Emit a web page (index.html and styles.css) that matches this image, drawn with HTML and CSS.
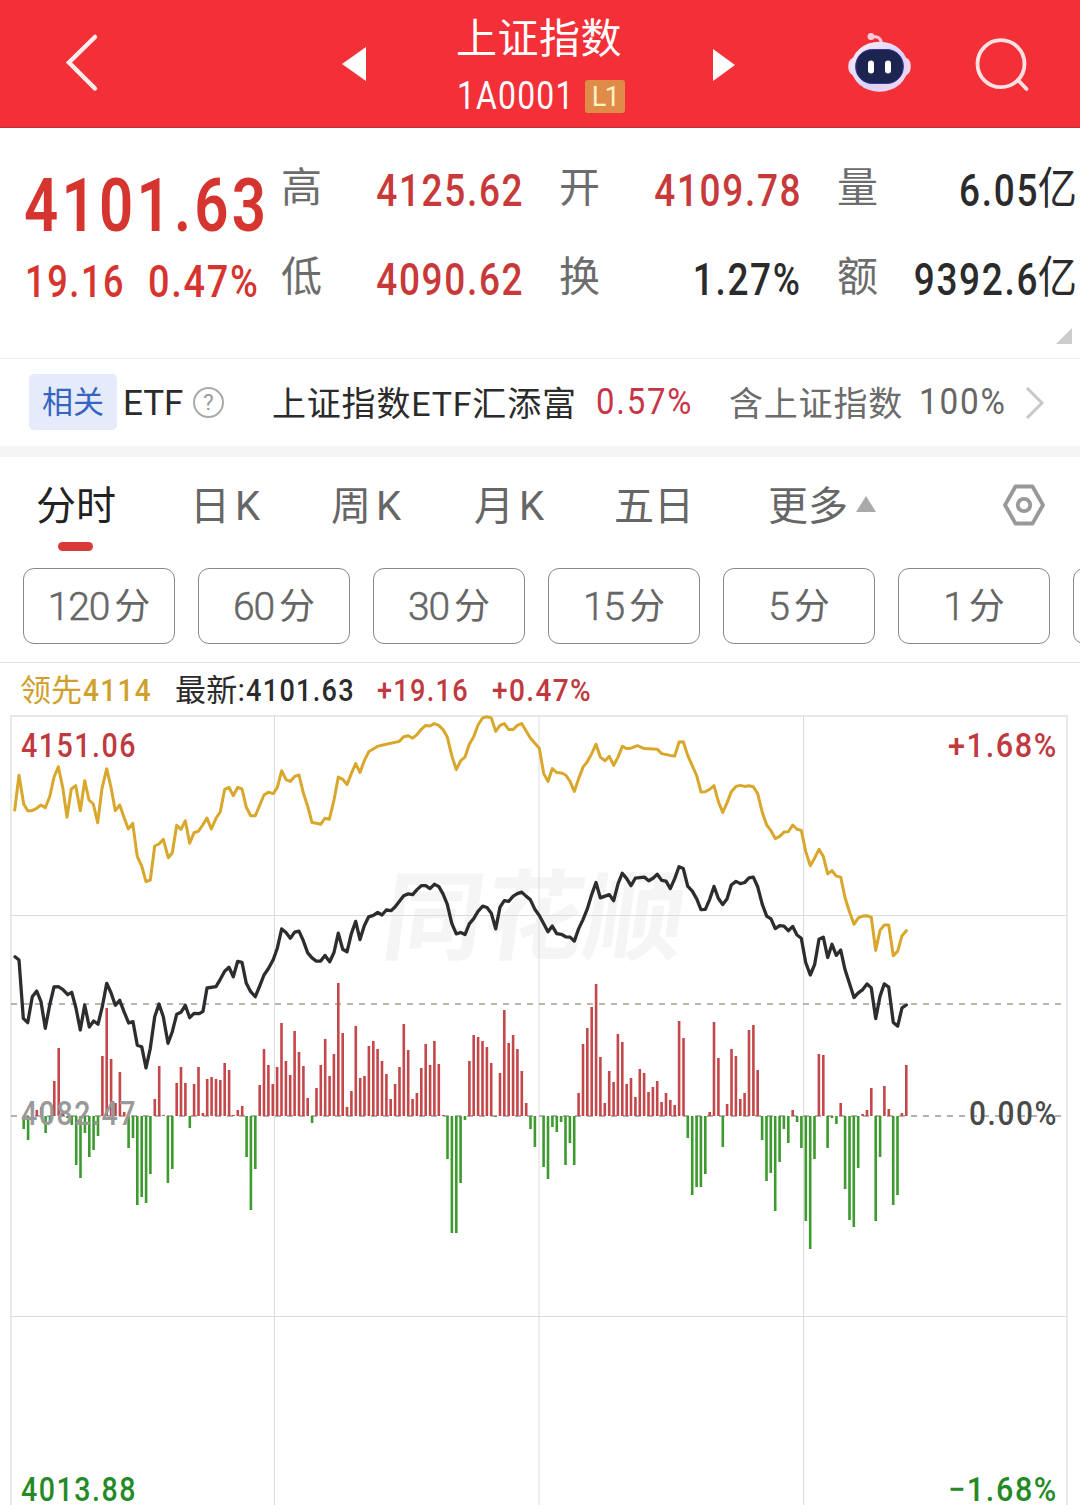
FILE: index.html
```html
<!DOCTYPE html>
<html lang="zh-CN">
<head>
<meta charset="utf-8">
<title>上证指数</title>
<link rel="stylesheet" href="styles.css">
</head>
<body>
<header class="topbar">
  <svg class="icon-back" width="40" height="64" viewBox="0 0 40 64"><path d="M34 6 8 31.500 34 57.500"/></svg>
  <svg class="arrow prev" width="24" height="36" viewBox="0 0 24 36"><path d="M0 18 24 1V35Z"/></svg>
  <div class="title">
    <h1>上证指数</h1>
    <div class="code"><span class="num">1A0001</span><span class="level">L1</span></div>
  </div>
  <svg class="arrow next" width="22" height="34" viewBox="0 0 22 34"><path d="M22 17 0 1V33Z"/></svg>
  <svg class="robot" width="64" height="62" viewBox="847 32 64 62">
    <defs>
      <linearGradient id="shell" x1="0" y1="0" x2="1" y2="1"><stop offset="0" stop-color="#fff0f6"/><stop offset=".55" stop-color="#d9d4fa"/><stop offset="1" stop-color="#f6d5ec"/></linearGradient>
    </defs>
    <path d="M871 37Q881 35 881.500 44" fill="none" stroke="#ffc9d6" stroke-width="3"/>
    <circle cx="871" cy="36.500" r="3.500" fill="#ffc9d6"/>
    <rect x="848.300" y="57" width="62.400" height="19" rx="8" fill="#f3d8ef"/>
    <ellipse cx="879.500" cy="66.700" rx="28.500" ry="25" fill="url(#shell)"/>
    <rect x="855.700" y="49.500" width="47.600" height="34" rx="16.500" fill="#1b2550" stroke="#3a35a0" stroke-width="1"/>
    <rect x="868" y="60.500" width="6" height="13" rx="3" fill="#fff"/>
    <rect x="885" y="60.500" width="6" height="13" rx="3" fill="#fff"/>
  </svg>
  <svg class="search" width="56" height="56" viewBox="974 37 56 56"><circle cx="1001" cy="63.700" r="23.500"/><path d="M1018 80 1026.500 89"/></svg>
</header>

<section class="quote">
  <div class="last">
    <div class="price num">4101.63</div>
    <div class="change"><span class="num diff">19.16</span><span class="num">0.47%</span></div>
  </div>
  <dl class="stats">
    <div><dt>高</dt><dd class="num up">4125.62</dd></div>
    <div><dt>开</dt><dd class="num up">4109.78</dd></div>
    <div><dt>量</dt><dd class="num">6.05<b>亿</b></dd></div>
    <div><dt>低</dt><dd class="num up">4090.62</dd></div>
    <div><dt>换</dt><dd class="num">1.27%</dd></div>
    <div><dt>额</dt><dd class="num">9392.6<b>亿</b></dd></div>
  </dl>
  <i class="corner"></i>
</section>

<section class="related">
  <span class="tag">相关</span>
  <span class="etf">ETF</span>
  <span class="help">?</span>
  <span class="fund">上证指数<span>ETF</span>汇添富</span>
  <span class="num pct">0.57%</span>
  <span class="contains">含上证指数</span>
  <span class="num share">100%</span>
  <svg width="20" height="34" viewBox="0 0 20 34"><path d="M2 2 17 17 2 32"/></svg>
</section>

<nav class="tabs">
  <a class="active">分时</a><a>日<span>K</span></a><a>周<span>K</span></a><a>月<span>K</span></a><a>五日</a><a class="more">更多<i></i></a>
  <svg width="44" height="44" viewBox="0 0 44 44"><path d="M13.500 3.500H30.500L41 22 30.500 40.500H13.500L3 22Z"/><circle cx="22" cy="22" r="6.200"/></svg>
</nav>

<div class="periods">
  <span><em>120</em>分</span><span><em>60</em>分</span><span><em>30</em>分</span><span><em>15</em>分</span><span><em>5</em>分</span><span><em>1</em>分</span><span></span>
</div>

<section class="chart">
  <svg id="chart" width="1080" height="842" viewBox="0 663 1080 842">
    <g class="legend">
      <text class="lead" x="20" y="701" textLength="62">领先</text>
      <text class="lead" x="83" y="701" textLength="69" lengthAdjust="spacingAndGlyphs">4114</text>
      <text class="latest" x="175" y="701" textLength="70">最新:</text>
      <text class="latest" x="246" y="701" textLength="109" lengthAdjust="spacingAndGlyphs">4101.63</text>
      <text class="rise" x="377" y="701" textLength="92" lengthAdjust="spacingAndGlyphs">+19.16</text>
      <text class="rise" x="492" y="701" textLength="100" lengthAdjust="spacingAndGlyphs">+0.47%</text>
    </g>
    <text class="watermark" transform="translate(379 952) skewX(-8)" textLength="302" lengthAdjust="spacingAndGlyphs">同花顺</text>
    <path class="grid edge" d="M11 1505V716H1067V1505"/>
    <path class="grid" d="M274.500 716V1505M539 716V1505M803.500 716V1505M11 915.500H1067M11 1316.500H1067"/>
    <path class="dash current" d="M11 1004H1067"/>
    <path class="dash" d="M11 1116H1067"/>
    <g class="scale">
      <text class="rise" x="21" y="757" textLength="116" lengthAdjust="spacingAndGlyphs">4151.06</text>
      <text class="rise" x="948" y="757" textLength="110" lengthAdjust="spacingAndGlyphs">+1.68%</text>
      <text class="zero" x="969" y="1125" textLength="89" lengthAdjust="spacingAndGlyphs">0.00%</text>
      <text class="fall" x="21" y="1501" textLength="116" lengthAdjust="spacingAndGlyphs">4013.88</text>
      <text class="fall" x="948" y="1501" textLength="110" lengthAdjust="spacingAndGlyphs">−1.68%</text>
    </g>
    <path id="bars-up" class="bar up"/>
    <path id="bars-down" class="bar down"/>
    <polyline id="lead-line" class="line lead-line"/>
    <polyline id="price-line" class="line price-line"/>
    <g class="scale"><text class="prev-close" x="21" y="1125" textLength="116" lengthAdjust="spacingAndGlyphs">4082.47</text></g>
  </svg>
</section>
<script src="chart.js"></script>
</body>
</html>
```
FILE: styles.css
```css
* { box-sizing: border-box; }
body {
  margin: 0;
  width: 1080px;
  height: 1505px;
  overflow: hidden;
  background: #fff;
  color: #2b2b2b;
  font-family: Roboto, "Noto Sans CJK SC", sans-serif;
}
svg { display: block; flex: none; }
.num { display: inline-block; white-space: nowrap; transform: scaleX(.92); transform-origin: left center; }

.topbar { display: flex; height: 128px; background: #f32f38; border-bottom: 1px solid #b9343c; color: #fff; }
.icon-back { margin: 31px 0 0 61px; }
.icon-back path { fill: none; stroke: #ffeced; stroke-width: 4.5; stroke-linecap: round; }
.arrow { fill: #fff; }
.prev { margin: 46px 0 0 241px; }
.next { margin: 48px 0 0 72px; }
.title { flex: none; width: 184px; margin-left: 91px; padding-top: 13px; }
.title h1 { margin: 0; font-size: 41px; line-height: 52px; font-weight: 400; letter-spacing: .5px; text-indent: -1px; }
.code { display: flex; align-items: center; height: 33px; margin-top: 15px; }
.code .num { width: 128px; font-size: 38px; line-height: 33px; letter-spacing: 1.4px; transform: scaleX(.84); }
.level { width: 40px; height: 33px; border-radius: 3px; background: #e08c48; color: #fff3c4; font-size: 27px; line-height: 34px; text-align: center; letter-spacing: -1.5px; }
.robot { margin: 32px 0 0 112px; }
.search { margin: 37px 0 0 63px; }
.search circle, .search path { fill: none; stroke: #ffe1e2; stroke-width: 3.8; stroke-linecap: round; }

.quote { position: relative; display: flex; height: 231px; border-bottom: 1px solid #ececec; }
.last { flex: none; width: 281px; padding: 35px 0 0 24px; color: #d6352f; }
.price { font-size: 75px; line-height: 84px; font-weight: 600; letter-spacing: 4px; transform: scaleX(.8); }
.change { display: flex; margin-top: 10px; padding-left: 1px; font-size: 44px; line-height: 50px; font-weight: 500; letter-spacing: 2px; }
.change .diff { width: 123px; }
.change .num { transform: scaleX(.84); }
.change .diff { transform: scaleX(.82); }
.change .num:last-child { transform: scaleX(.86); }
.stats { display: grid; grid-template-columns: repeat(3, 242px); column-gap: 36px; grid-auto-rows: 89px; margin: 17px 0 0; }
.stats div { display: flex; justify-content: space-between; align-items: center; }
.stats dt { font-size: 41px; line-height: 60px; color: #6c6c6c; font-weight: 400; margin-top: -3px; }
.stats dd { margin: 2px -1px 0 0; font-size: 44px; line-height: 60px; font-weight: 500; letter-spacing: 2px; transform: scaleX(.84); transform-origin: right center; }
.stats b { display: inline-block; margin-right: 5px; font-weight: 400; letter-spacing: 0; transform: scaleX(1.06) translateY(-2px); }
.up { color: #c8393a; }
.corner { position: absolute; right: 8px; bottom: 14px; border-left: 16px solid transparent; border-bottom: 16px solid #ccc; }

.related { display: flex; align-items: center; height: 98px; padding-left: 29px; border-bottom: 11px solid #f5f5f5; white-space: nowrap; }
.tag { width: 88px; height: 56px; margin-top: -1px; border-radius: 5px; background: #e6ebfc; color: #3565c0; font-size: 31px; line-height: 58px; text-align: center; }
.etf { width: 70px; margin: 2px 0 0 6px; font-size: 35px; }
.help { width: 31px; height: 31px; border: 2px solid #aaa; border-radius: 50%; color: #999; font-size: 22px; line-height: 27px; text-align: center; }
.fund { width: 324px; margin: -3px 0 0 48px; font-size: 34px; letter-spacing: .8px; }
.pct { width: 133px; margin-top: -2px; color: #c83448; font-size: 37px; letter-spacing: 2px; transform: scaleX(.89); }
.contains { width: 190px; margin-top: -3px; font-size: 34px; letter-spacing: .8px; color: #6c6c6c; }
.share { width: 106px; margin-top: -3px; color: #666; font-size: 37px; letter-spacing: 2px; transform: scaleX(.9); }
.related path { fill: none; stroke: #c8c8c8; stroke-width: 3; }

.tabs { display: flex; height: 111px; padding-left: 36px; font-size: 40px; line-height: 99px; color: #666; }
.tabs a { position: relative; width: 142px; white-space: nowrap; }
.tabs a:first-child { width: 154px; }
.tabs a:nth-child(2) { width: 141px; }
.tabs a:nth-child(3) { width: 143px; }
.tabs a:nth-child(4) { width: 140px; }
.tabs a:nth-child(5) { width: 154px; }
.tabs span { margin-left: 5px; }
.tabs .active { color: #222; }
.tabs .active::after { content: ""; position: absolute; left: 22px; top: 85px; width: 35px; height: 9px; border-radius: 5px; background: #d93a36; }
.tabs .more { width: 234px; }
.more i { display: inline-block; margin-left: 8px; vertical-align: 8px; border: 10px solid transparent; border-top: 0; border-bottom: 16px solid #aaa; }
.tabs svg { margin-top: 26px; fill: none; stroke: #999; stroke-width: 3.8; stroke-linejoin: round; }

.periods { display: flex; gap: 23px; height: 95px; padding-left: 23px; border-bottom: 1px solid #e2e2e2; overflow: hidden; }
.periods span { display: flex; flex: none; justify-content: center; gap: 5px; width: 152px; height: 76px; border: 1px solid #888; border-radius: 11px; color: #666; font-size: 36px; line-height: 76px; }
.periods em { font-style: normal; font-size: 39px; font-weight: 300; -webkit-text-stroke: .5px #666; letter-spacing: -1.2px; }

.legend text { font-size: 31px; font-weight: 500; letter-spacing: 1.5px; }
.legend text:nth-child(1), .legend text:nth-child(3) { font-weight: 400; letter-spacing: 0; }
.lead { fill: #d0a02c; }
.latest { fill: #2b2b2b; }
.rise { fill: #c0393e; }
.fall { fill: #258a25; }
.zero { fill: #4a4a4a; }
.prev-close { fill: #999; }
.scale text { font-size: 34px; font-weight: 500; letter-spacing: 1.8px; }
.watermark { font-size: 98px; font-weight: 700; fill: #f5f5f5; }
.grid { fill: none; stroke: #dcdcdc; stroke-width: 1; }
.edge { stroke: #e8e8e8; stroke-width: 2; }
.dash { stroke: #999; stroke-width: 1.5; stroke-dasharray: 6 6; }
.current { stroke: #a5a090; }
.bar { fill: none; stroke-width: 2.6; }
.bar.up { stroke: #c4474a; }
.bar.down { stroke: #3d9a2e; }
.line { fill: none; stroke-linejoin: round; stroke-linecap: round; }
.lead-line { stroke: #d8a72c; stroke-width: 3; }
.price-line { stroke: #2d2d2d; stroke-width: 3.3; }
```
FILE: chart.js
```js
// Per-minute momentum bars, in pixels above (+) or below (-) the zero line.
const momentum = [
  0,0,-13,-24,0,6,9,-17,-6,35,68,2,-2,-9,-49,-62,-17,-41,-34,-20,
  60,108,57,13,44,4,-32,-22,-89,-81,-87,-58,17,50,1,-67,-53,33,49,33,
  -12,32,49,3,37,39,37,36,53,46,1,6,10,-41,-94,-53,31,67,51,32,
  49,93,55,41,85,64,50,18,-7,28,51,77,40,62,133,83,9,25,90,38,
  40,70,75,67,55,42,17,32,49,92,66,17,23,48,72,51,75,52,1,-43,
  -117,-117,-67,-4,55,81,79,75,69,53,-1,43,106,73,81,67,45,13,-13,-31,
  0,-51,-63,-11,-16,-6,-49,-27,-49,23,72,88,109,132,59,13,45,34,82,74,
  32,38,19,47,43,24,29,35,14,23,16,11,95,78,-22,-79,-71,-71,-58,4,
  94,58,-31,12,67,60,17,23,86,91,46,-24,-65,-57,-95,-46,-13,-27,6,-6,
  -32,-105,-133,-43,62,61,-32,-2,-8,13,-73,-104,-111,-52,2,6,28,-105,-41,30,
  7,-89,-79,3,51
];

const leadPoints = `14.700,810 19,775.300 23.700,804 27.700,810.700 32,810.700 36.700,808.300 41,805 45.300,807.700 49.700,796.700 54,777.300
58.300,766.700 62.700,787.300 67,817.300 71.300,789 75.700,785.700 80.300,810.700 84.700,780.700 89,800 93.300,804 97.700,822.700
102,788.300 106.700,768.700 111,787.300 115.300,810.700 119.700,805 124,817.300 128.300,829 132.700,823.300 137.300,856.700 141.700,866
146,881.700 150.300,880 154.700,846 159,844 163.300,839.300 168.300,857.700 172.300,852.700 176.700,825.300 181,829.300 185.300,820.700
189.700,843.300 194,832.700 198.300,831.300 202.700,825 207,818 211.300,829 216,818.300 220.300,811.700 224.700,789.300 229,787.300
233.300,795.700 237.700,787.300 242,789 246.300,807.300 250.700,815.700 255.300,815.700 264,795 268.300,792.300 273.300,793.600 277.300,787.500
281.700,770.700 286,779.600 290.300,781.400 294.700,776.400 299,775 303.300,792.900 307.700,806.400 312,822.500 316.700,823.200 320.700,824.300
325,818.200 329.300,819.300 334,800 338.300,777.100 342.700,779.300 347,784.600 351.300,773.600 355.700,763.600 360,772.500 364.300,760.700
368.700,751.800 377.300,746.400 386.300,744.300 399.300,741.400 403.700,736.800 408.300,735.700 412.700,738.200 417,734.600 421.300,729.300 425.700,725.400
430,726 434.300,723.600 438.700,725.400 443,729.600 447.300,737.100 451.700,755.400 456.300,769.600 460.700,760.700 465,757.100 469.300,744.300
473.700,736.800 478,725 482.700,717.900 487,716.800 491.300,717.900 495.700,731.400 500,725.400 504.300,723.600 508.700,729.600 513,729.600
517.300,725.400 521.700,723.600 530.300,737.900 539.300,748.200 543.700,773.600 548,781.400 552.300,768.600 556.700,772.500 561.300,772.900 565.700,775
570,781.400 574.300,791.400 578.700,778.600 583,767.100 587.300,761.800 591.700,753.600 596,744.300 600.300,757.100 605,760.700 609.300,756.400
613.700,765.400 618,757.100 622.300,746.400 626.700,748.600 631,748.200 637.300,745.700 644.300,748.600 657.300,749.300 661.700,753.600 670.300,755.400
674.700,756.100 679,742.100 683.300,741.800 687.700,755.400 696.700,775.700 701,792.100 705.300,791.800 709.700,789.300 714,785.700 718.300,801.400
722.700,812.500 727,802.900 731.300,791.800 736,786.400 740.300,785.400 744.700,786.400 749,785.700 753.300,786.800 757.700,793.600 762.300,812.500
766.700,825 771,830.700 775.300,838.600 779.700,836.400 784,832.100 788.300,831.800 792.700,825 797,829.300 801.300,830.400 805.700,851.400
810.300,865.700 814.700,857.900 819,849.300 823.300,856.400 827.700,873.900 832,870.700 836.300,876.100 840.700,877.100 845,897.500 849.700,912.500
854,924.300 858.300,917.900 862.700,916.100 867,915.700 871.300,917.500 875.700,950.400 880,930.400 884.300,925 888.700,925 893.300,955.700
897.700,951.100 902,935.700 906.300,930.700`;

const pricePoints = `15,956.700 19,960 23.300,1018.300 27.700,1022.700 32.300,996.700 36.700,991 41,1001.700 45.300,1028.300 49.700,1005 54,987
58.300,986.700 62.700,989.300 67.700,994.700 71.700,992.300 76,1008.300 80.300,1030 84.700,1005 89.300,1027 93.700,1021 98,1024.300
102.300,1006.700 106.700,983.300 111,992.700 115.300,1005.300 119.700,1000.300 124,1011.700 128.700,1023 133,1021.700 137.300,1045.300 141.700,1046.700
146,1068 150.300,1048.300 154.700,1016.700 159,1004 163.300,1016.700 168,1043.300 172.300,1031.700 176.700,1014.300 181,1012.300 185.300,1005.300
189.700,1017.700 194,1013.300 199.300,1013.700 203,1011.300 207,988 216,986.700 220.300,979.300 224.700,971.300 229,967.300 233.300,976.700
237.700,961.300 242,962.300 246.300,983.300 250.700,991.700 255.300,996.700 259.700,986 264,975 268.300,968.700 273.300,959.500 277.300,948.200
281.700,928.900 286,932.500 290.300,938.200 294.700,932.100 299,931.100 303.300,940.700 307.700,952.900 312,957.900 316.300,961.100 320.700,961.100
325,955.400 329.700,961.800 334,952.500 338.300,933.200 342.700,949.300 347,951.800 351.300,933.900 355.700,921.400 360,939.600 364.300,925.700
368.700,916.800 373.300,915.400 377.700,912.500 382,915 386.300,910 391,910.700 395,907.100 403.700,895.700 408.300,893.900 412.700,894.600
417,889.600 421.300,885.700 425.700,885.700 430,888.600 434.300,884.300 438.700,886.400 443,893.900 447.300,904.300 451.700,923.200 456.300,933.900
460.700,932.500 465,934.600 469.300,923.900 473.700,918.600 478,911.400 482.700,906.100 487,907.500 491.300,913.200 495.700,928.900 500,907.100
504.300,900.700 508.700,901.400 513,896.400 517.300,893.600 521.700,892.100 526,896.100 530.300,899.600 535,909.600 539.300,915.400 548,931.800
552.300,926.100 556.700,933.600 561.300,934.300 565.700,936.800 570,937.100 574.300,941.100 578.700,928.600 583,919.600 587.300,908.900 591.700,894.600
596,882.500 600.300,897.900 609.300,894.600 613.700,900.700 618,883.900 622.300,873.200 626.700,878.600 631,885.700 635.300,878.200 644.300,877.100
648.700,880.700 653,878.200 657.300,874.300 661.700,880.400 666,881.100 670.300,888.600 674.700,878.600 679,866.800 683.300,868.600 687.700,886.100
692.300,891.100 696.700,898.900 701,909.600 705.300,909.300 709.700,899.300 714,886.400 718.300,898.200 722.700,904.600 727,898.900 731.300,885
736,881.400 740.300,883.600 744.700,882.500 749,877.900 753.300,877.100 757.700,886.800 762.300,904.300 766.700,916.100 771,918.900 775.300,928.600
779.700,925.700 784,926.100 788.300,930.700 792.700,926.400 797,935 801.300,938.200 805.700,962.500 810.300,975 814.700,964.300 819,939.300
823.300,937.100 827.700,957.500 832,944.300 836.300,955.400 840.700,950 845,969.600 854,997.500 858.300,992.900 862.700,989.600 867,983.900
871.300,987.900 875.700,1018.600 880,996.400 884.300,983.900 888.700,987.100 893.300,1022.500 897.700,1026.100 902,1007.900 906.300,1005`;

const LEFT = 15, STEP = 4.369, ZERO = 1116;
const bars = keep => momentum
  .map((v, i) => (keep(v) ? `M${(LEFT + i * STEP).toFixed(1)} ${ZERO}v${-v}` : ''))
  .join('');

document.getElementById('bars-up').setAttribute('d', bars(v => v > 0));
document.getElementById('bars-down').setAttribute('d', bars(v => v < 0));
document.getElementById('lead-line').setAttribute('points', leadPoints);
document.getElementById('price-line').setAttribute('points', pricePoints);
```
